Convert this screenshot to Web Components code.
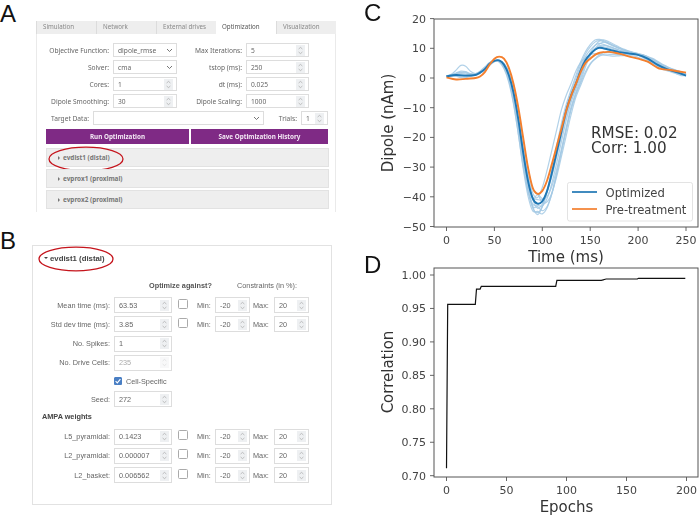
<!DOCTYPE html>
<html>
<head>
<meta charset="utf-8">
<style>
  html, body { margin: 0; background: #fff; }
  body { width: 700px; height: 516px; overflow: hidden; }
</style>
</head>
<body>
<hnn-figure>
  <fig-panel slot="left" letter="A" style="--col:36px; --drop:19px; --top:2px; height:229px">
    <opt-tabs>
      <field-row>
        <hnn-field label="Objective Function:" value="dipole_rmse" kind="select" lw="72" bw="64"></hnn-field>
        <hnn-field label="Max Iterations:" value="5" lw="65" bw="63"></hnn-field>
      </field-row>
      <field-row>
        <hnn-field label="Solver:" value="cma" kind="select" lw="72" bw="64"></hnn-field>
        <hnn-field label="tstop (ms):" value="250" lw="65" bw="63"></hnn-field>
      </field-row>
      <field-row>
        <hnn-field label="Cores:" value="1" lw="72" bw="64"></hnn-field>
        <hnn-field label="dt (ms):" value="0.025" lw="65" bw="63"></hnn-field>
      </field-row>
      <field-row>
        <hnn-field label="Dipole Smoothing:" value="30" lw="72" bw="64"></hnn-field>
        <hnn-field label="Dipole Scaling:" value="1000" lw="65" bw="63"></hnn-field>
      </field-row>
      <field-row>
        <hnn-field label="Target Data:" value="" kind="select" lw="52" bw="171"></hnn-field>
        <hnn-field label="Trials:" value="1" lw="33" bw="27"></hnn-field>
      </field-row>
      <button-row>
        <opt-button style="width:144px">Run Optimization</opt-button>
        <opt-button style="width:138px">Save Optimization History</opt-button>
      </button-row>
      <drive-row ringed>evdist1 (distal)</drive-row>
      <drive-row>evprox1 (proximal)</drive-row>
      <drive-row>evprox2 (proximal)</drive-row>
    </opt-tabs>
  </fig-panel>

  <fig-panel slot="left" letter="B" style="--col:32px; --drop:16px; --top:0px; height:287px">
    <drive-card></drive-card>
  </fig-panel>

  <dipole-chart slot="right"></dipole-chart>
  <corr-chart slot="right"></corr-chart>
</hnn-figure>

<script>
const SVG_NS = "http://www.w3.org/2000/svg";

// up/down chevrons of a number box
const SPIN = `<svg width="9" height="11" viewBox="0 0 9 11"><rect width="9" height="11" fill="#eef0f2"/>
  <path d="M2.6 4 L4.5 2.4 L6.4 4 M2.6 7 L4.5 8.6 L6.4 7" fill="none" stroke="#9a9a9a" stroke-width=".6"/></svg>`;
const CHEVRON = `<svg width="7" height="5" viewBox="0 0 7 5"><path d="M1 1 L3.5 3.5 L6 1" fill="none" stroke="#666" stroke-width=".9"/></svg>`;

class HnnFigure extends HTMLElement {
  constructor() {
    super();
    this.attachShadow({ mode: "open" }).innerHTML = `
      <style>
        :host { display: grid; grid-template-columns: 350px 350px; width: 700px; height: 516px; }
        .col { display: flex; flex-direction: column; }
      </style>
      <div class="col"><slot name="left"></slot></div>
      <div class="col"><slot name="right"></slot></div>`;
  }
}

class FigPanel extends HTMLElement {
  constructor() {
    super();
    this.attachShadow({ mode: "open" }).innerHTML = `
      <style>
        :host { display: grid; grid-template-columns: var(--col) 1fr; box-sizing: border-box; padding-top: var(--top); }
        .letter { font: 24px/24px "Liberation Sans", sans-serif; color: #111; }
        .body { margin-top: var(--drop); filter: blur(.3px); }
      </style>
      <div class="letter">${this.getAttribute("letter")}</div>
      <div class="body"><slot></slot></div>`;
  }
}

class OptTabs extends HTMLElement {
  constructor() {
    super();
    const names = ["Simulation", "Network", "External drives", "Optimization", "Visualization"];
    const tabs = names.map((n) => `<div class="tab ${n === "Optimization" ? "on" : ""}">${n}</div>`).join("");
    this.attachShadow({ mode: "open" }).innerHTML = `
      <style>
        :host { display: block; width: 300px; font: 6.65px "Noto Sans", sans-serif; color: #555; }
        .tabs { display: flex; height: 13px; font-size: 6.2px; }
        .tab { width: 60px; box-sizing: border-box; padding-left: 6px; line-height: 12px; background: #eee; color: #888; border-left: 1px solid #dcdcdc; }
        .tab.on { background: #fff; color: #555; border-left: 0; }
        .pane { box-sizing: border-box; height: 178px; padding: 9px 7px 0 9px; border: 1px solid #eaeaea; border-width: 0 1px; }
      </style>
      <div class="tabs">${tabs}</div>
      <div class="pane"><slot></slot></div>`;
  }
}

class FieldRow extends HTMLElement {
  constructor() {
    super();
    this.attachShadow({ mode: "open" }).innerHTML = `
      <style>:host { display: flex; height: 14px; margin-bottom: 3px; margin-left: -9px; }</style><slot></slot>`;
  }
}

class HnnField extends HTMLElement {
  constructor() {
    super();
    const kind = this.getAttribute("kind") || "number";
    const lw = this.getAttribute("lw");
    const bw = this.getAttribute("bw");
    this.attachShadow({ mode: "open" }).innerHTML = `
      <style>
        :host { display: flex; align-items: center; gap: 4px; }
        .label { width: ${lw}px; text-align: right; white-space: nowrap; color: #666; }
        .box { width: ${bw}px; height: 14px; box-sizing: border-box; display: flex; align-items: center; justify-content: space-between;
               padding: 0 3px 0 4px; border: 1px solid #ddd; background: #fff; color: #666; }
        svg { display: block; }
      </style>
      <div class="label">${this.getAttribute("label")}</div>
      <div class="box"><span>${this.getAttribute("value")}</span>${kind === "select" ? CHEVRON : SPIN}</div>`;
  }
}

class ButtonRow extends HTMLElement {
  constructor() {
    super();
    this.attachShadow({ mode: "open" }).innerHTML = `
      <style>:host { display: flex; gap: 2px; margin: 4px 0 4px; }</style><slot></slot>`;
  }
}

class OptButton extends HTMLElement {
  constructor() {
    super();
    this.attachShadow({ mode: "open" }).innerHTML = `
      <style>
        :host { display: block; height: 15px; line-height: 15px; text-align: center; background: #7f2a85; color: #f4e9f5; font-weight: 700; font-size: 6.3px; }
      </style><slot></slot>`;
  }
}

class DriveRow extends HTMLElement {
  constructor() {
    super();
    const ring = this.hasAttribute("ringed")
      ? `<red-ring style="left:1px; top:-3px"></red-ring>` : "";
    this.attachShadow({ mode: "open" }).innerHTML = `
      <style>
        :host { display: flex; align-items: center; position: relative; box-sizing: border-box; width: 283px; height: 19px; margin: 0 0 2px 0;
                padding-left: 11px; gap: 3px; background: #eee; border: 1px solid #e2e2e2; font-weight: 700; font-size: 6.4px; color: #777; }
        .arrow { width: 0; height: 0; border-left: 2.5px solid #777; border-top: 2px solid transparent; border-bottom: 2px solid transparent; }
      </style>
      <span class="arrow"></span><slot></slot>${ring}`;
  }
}

// hand drawn red marker round the drive name
class RedRing extends HTMLElement {
  constructor() {
    super();
    this.attachShadow({ mode: "open" }).innerHTML = `
      <style>:host { display: block; position: absolute; width: 77px; height: 26px; } svg { display: block; overflow: visible; }</style>
      <svg width="77" height="26" viewBox="0 0 77 26"><ellipse cx="38" cy="13" rx="37" ry="11.8" fill="none" stroke="#c5141c" stroke-width="1.3"/></svg>`;
  }
}

class SmallBox extends HTMLElement {
  constructor() {
    super();
    const w = this.getAttribute("w");
    const off = this.hasAttribute("disabled");
    this.attachShadow({ mode: "open" }).innerHTML = `
      <style>
        :host { display: flex; align-items: center; justify-content: space-between; box-sizing: border-box; width: ${w}px; height: 16px;
                padding: 0 2px 0 4px; border: 1px solid #ddd; color: ${off ? "#aaa" : "#666"}; background: #fff; flex: none; }
        svg { display: block; ${off ? "opacity:.4;" : ""} }
      </style>
      <span><slot></slot></span>${SPIN}`;
  }
}

class DriveCard extends HTMLElement {
  constructor() {
    super();
    const check = `<span class="check"></span>`;
    const bounds = `${check}<span class="mm m1">Min:</span><small-box w="35">-20</small-box><span class="mm m2">Max:</span><small-box w="35">20</small-box>`;
    const row = (label, value, extra = "", attrs = "") =>
      `<div class="row"><span class="lab">${label}</span><small-box w="58" ${attrs}>${value}</small-box>${extra}</div>`;
    this.attachShadow({ mode: "open" }).innerHTML = `
      <style>
        :host { display: block; box-sizing: border-box; position: relative; width: 300px; height: 260px; padding: 6px 0 0 0;
                border: 1px solid #e2e2e2; font: 7.3px "Liberation Sans", sans-serif; color: #666; }
        .head { display: flex; align-items: center; gap: 2px; height: 12px; padding-left: 11px; margin-bottom: 17px; font-size: 7.8px; font-weight: 700; color: #444; position: relative; }
        .tri { width: 0; height: 0; border-top: 2.5px solid #444; border-left: 2px solid transparent; border-right: 2px solid transparent; }
        .titles { display: flex; height: 10px; line-height: 10px; margin-bottom: 6px; }
        .titles b { margin-left: 116px; width: 88px; color: #555; }
        .row { display: flex; align-items: center; height: 16px; margin-bottom: 3.3px; }
        .lab { width: 77px; margin-right: 4px; text-align: right; white-space: nowrap; }
        .check { width: 8px; height: 8px; margin: -3px 0 0 6px; border: 1px solid #aaa; border-radius: 1.5px; flex: none; }
        .mm { flex: none; }
        .m1 { width: 14px; margin: 0 4px 0 9px; }
        .m2 { width: 16px; margin: 0 5px 0 3px; }
        .cell { display: flex; align-items: center; height: 14px; margin: 0 0 3px 81px; gap: 4px; }
        .tick { width: 8px; height: 8px; border-radius: 1.5px; background: #4a7fc4; display: block; }
        .ampa { height: 10px; line-height: 10px; padding-left: 9px; margin: 5px 0 6.5px; font-weight: 700; color: #444; }
        red-ring { left: 5px; top: -6px; }
      </style>
      <div class="head"><span class="tri"></span>evdist1 (distal)<red-ring></red-ring></div>
      <div class="titles"><b>Optimize against?</b><span>Constraints (in %):</span></div>
      ${row("Mean time (ms):", "63.53", bounds)}
      ${row("Std dev time (ms):", "3.85", bounds)}
      ${row("No. Spikes:", "1")}
      ${row("No. Drive Cells:", "235", "", "disabled")}
      <div class="cell"><svg class="tick" viewBox="0 0 8 8"><rect width="8" height="8" rx="1.5" fill="#4a7fc4"/><path d="M1.6 4.2 L3.3 5.9 L6.4 2.2" fill="none" stroke="#fff" stroke-width="1.1"/></svg>Cell-Specific</div>
      ${row("Seed:", "272")}
      <div class="ampa">AMPA weights</div>
      ${row("L5_pyramidal:", "0.1423", bounds)}
      ${row("L2_pyramidal:", "0.000007", bounds)}
      ${row("L2_basket:", "0.006562", bounds)}`;
  }
}

// small svg helpers shared by both charts
function el(parent, name, attrs, text) {
  const node = document.createElementNS(SVG_NS, name);
  for (const k in attrs) node.setAttribute(k, attrs[k]);
  if (text !== undefined) node.textContent = text;
  parent.appendChild(node);
  return node;
}

// catmull-rom through the points
function smoothPath(pts) {
  let d = `M${pts[0][0]} ${pts[0][1]}`;
  for (let i = 0; i < pts.length - 1; i++) {
    const p0 = pts[i - 1] || pts[i], p1 = pts[i], p2 = pts[i + 1], p3 = pts[i + 2] || p2;
    d += ` C${p1[0] + (p2[0] - p0[0]) / 6} ${p1[1] + (p2[1] - p0[1]) / 6} ${p2[0] - (p3[0] - p1[0]) / 6} ${p2[1] - (p3[1] - p1[1]) / 6} ${p2[0]} ${p2[1]}`;
  }
  return d;
}

const AXIS_FONT = "'DejaVu Sans', sans-serif";

class ChartBase extends HTMLElement {
  setup(height) {
    const root = this.attachShadow({ mode: "open" });
    root.innerHTML = `<style>:host { display: block; width: 350px; height: ${height}px; } svg { display: block; overflow: visible; filter: blur(.25px); }</style>`;
    this.svg = el(root, "svg", { width: 350, height, viewBox: `0 0 350 ${height}` });
  }

  label(x, y, txt, size, attrs = {}) {
    return el(this.svg, "text", { x, y, "font-size": size, "font-family": AXIS_FONT, fill: "#333", ...attrs }, txt);
  }

  axes(box, xTicks, yTicks) {
    const { x0, x1, y0, y1 } = box;
    for (const [px, txt] of xTicks) {
      el(this.svg, "line", { x1: px, x2: px, y1: y1, y2: y1 + 4, stroke: "#555", "stroke-width": 0.9 });
      this.label(px, y1 + 17, txt, 11, { "text-anchor": "middle", fill: "#444" });
    }
    for (const [py, txt] of yTicks) {
      el(this.svg, "line", { x1: x0 - 4, x2: x0, y1: py, y2: py, stroke: "#555", "stroke-width": 0.9 });
      this.label(x0 - 8, py + 4, txt, 11, { "text-anchor": "end", fill: "#444" });
    }
    el(this.svg, "rect", { x: x0, y: y0, width: x1 - x0, height: y1 - y0, fill: "none", stroke: "#555", "stroke-width": 1 });
  }
}

const ORANGE = [[0,.2],[10,-.5],[20,-.3],[30,0],[35,.5],[40,2],[45,4.5],[50,6.5],[55,7.2],[60,6.5],[65,3.5],[70,-2],[75,-10],[80,-20],[85,-30],[90,-37],[95,-39],[100,-38],[105,-34.5],[110,-29],[115,-23],[120,-17],[125,-11],[130,-6],[135,-2],[140,2],[145,5],[150,6.5],[155,7.8],[160,8.5],[170,8.8],[180,8.2],[190,7.3],[200,6.5],[210,5.5],[220,3.5],[225,3],[235,2.6],[250,1.8]];
const BLUE = [[0,.6],[10,1],[20,.8],[30,1],[35,1.8],[40,3],[45,4.8],[50,5.8],[55,5.9],[60,4.5],[65,1],[70,-5],[75,-14],[80,-25],[85,-34.5],[90,-40.5],[95,-42.3],[100,-41.5],[105,-38],[110,-32],[115,-25],[120,-18],[125,-11],[130,-6],[135,-2],[140,2.5],[145,6],[150,8],[155,9.5],[160,10.2],[170,9.5],[180,8.7],[190,8.3],[200,7.8],[210,6.5],[220,4.5],[230,3],[240,2],[250,.8]];
// per trial: time shift before / after trough, trough scale, late peak scale, early hump
const TRIALS = [
  [-1.5, 3, 1.09, 1.28, 3.6], [1, -3, 1.1, 1.3, 0], [-1, 4, 1.06, 1.2, 1], [0.5, -5, .97, .8, -.5],
  [-2, 2, 1.03, 1.1, 1.2], [1.5, 5, .96, .78, 0], [0, -2, 1.08, 1.25, .6], [-.5, 6, 1.0, .85, -.8],
  [1, -1, 1.04, 1.15, .3], [-1, 1.5, .98, 1.05, 1.5],
];

function blueAt(t) {
  const c = Math.max(0, Math.min(250, t));
  for (let i = 0; i < BLUE.length - 1; i++) {
    if (c <= BLUE[i + 1][0]) {
      const [a, va] = BLUE[i], [b, vb] = BLUE[i + 1];
      return va + (vb - va) * (c - a) / (b - a);
    }
  }
  return BLUE[BLUE.length - 1][1];
}

class DipoleChart extends ChartBase {
  constructor() {
    super();
    this.setup(267);
    const px = (t) => 96.5 + t * 0.958;
    const py = (v) => 78 - v * 2.97;
    const xTicks = [0, 50, 100, 150, 200, 250].map((t) => [px(t), String(t)]);
    const yTicks = [20, 10, 0, -10, -20, -30, -40, -50].map((v) => [py(v), String(v).replace("-", "\u2212")]);

    for (const [early, late, trough, peak, hump] of TRIALS) {
      const pts = [];
      for (let t = 0; t <= 250; t += 5) {
        const shift = t < 95 ? early : late;
        let v = blueAt(t - shift);
        if (v < 0 && t > 60 && t < 135) v *= trough;
        if (t >= 135) v *= 1 + (peak - 1) * Math.exp(-Math.pow((t - 160) / 28, 2));
        v += hump * Math.exp(-Math.pow((t - 17) / 8, 2));
        pts.push([px(t), py(v)]);
      }
      el(this.svg, "path", { d: smoothPath(pts), fill: "none", stroke: "#a3c9e4", "stroke-width": 1.2, opacity: 0.85 });
    }
    const line = (data, color, w) =>
      el(this.svg, "path", { d: smoothPath(data.map(([t, v]) => [px(t), py(v)])), fill: "none", stroke: color, "stroke-width": w });
    line(BLUE, "#1f77b4", 1.9);
    line(ORANGE, "#f47f2d", 1.9);

    this.axes({ x0: 84, x1: 348, y0: 19, y1: 227 }, xTicks, yTicks);

    this.label(14, 21, "C", 24, { "font-family": "'Liberation Sans', sans-serif", fill: "#111" });
    this.label(216, 262, "Time (ms)", 15, { "text-anchor": "middle" });
    this.label(0, 0, "Dipole (nAm)", 15, { transform: "translate(43 123) rotate(-90)", "text-anchor": "middle" });
    this.label(241, 138, "RMSE: 0.02", 15.2);
    this.label(241, 153, "Corr: 1.00", 15.2);

    el(this.svg, "rect", { x: 217.5, y: 182.5, width: 125, height: 38.5, rx: 2, fill: "#fff", "fill-opacity": 0.85, stroke: "#dcdcdc", "stroke-width": 0.8 });
    el(this.svg, "line", { x1: 222, x2: 247, y1: 192, y2: 192, stroke: "#1f77b4", "stroke-width": 1.7 });
    el(this.svg, "line", { x1: 222, x2: 247, y1: 209, y2: 209, stroke: "#f47f2d", "stroke-width": 1.7 });
    this.label(255.5, 196.5, "Optimized", 11.6, { fill: "#444" });
    this.label(255.5, 213.5, "Pre-treatment", 11.6, { fill: "#444" });
  }
}

class CorrChart extends ChartBase {
  constructor() {
    super();
    const top = 267;
    this.setup(516 - top);
    const px = (e) => 96.5 + e * 1.2;
    const py = (c) => 275 - top + (1 - c) * 669;
    const xTicks = [0, 50, 100, 150, 200].map((e) => [px(e), String(e)]);
    const yTicks = [1, .95, .9, .85, .8, .75, .7].map((c) => [py(c), c.toFixed(2)]);
    const steps = [[0,.711],[1,.956],[24,.956],[25,.979],[28,.979],[29,.983],[91,.983],[92,.992],[129,.992],[133,.994],[159,.994],[160,.995],[199,.995]];
    el(this.svg, "polyline", { points: steps.map(([e, c]) => `${px(e)},${py(c)}`).join(" "), fill: "none", stroke: "#111", "stroke-width": 1.2 });
    this.axes({ x0: 84, x1: 348, y0: 268 - top, y1: 477 - top }, xTicks, yTicks);
    this.label(14, 273 - top, "D", 24, { "font-family": "'Liberation Sans', sans-serif", fill: "#111" });
    this.label(216.5, 512 - top, "Epochs", 15, { "text-anchor": "middle" });
    this.label(0, 0, "Correlation", 15, { transform: `translate(43 ${372 - top}) rotate(-90)`, "text-anchor": "middle" });
  }
}

customElements.define("hnn-figure", HnnFigure);
customElements.define("fig-panel", FigPanel);
customElements.define("opt-tabs", OptTabs);
customElements.define("field-row", FieldRow);
customElements.define("hnn-field", HnnField);
customElements.define("button-row", ButtonRow);
customElements.define("opt-button", OptButton);
customElements.define("drive-row", DriveRow);
customElements.define("red-ring", RedRing);
customElements.define("small-box", SmallBox);
customElements.define("drive-card", DriveCard);
customElements.define("dipole-chart", DipoleChart);
customElements.define("corr-chart", CorrChart);
</script>
</body>
</html>
